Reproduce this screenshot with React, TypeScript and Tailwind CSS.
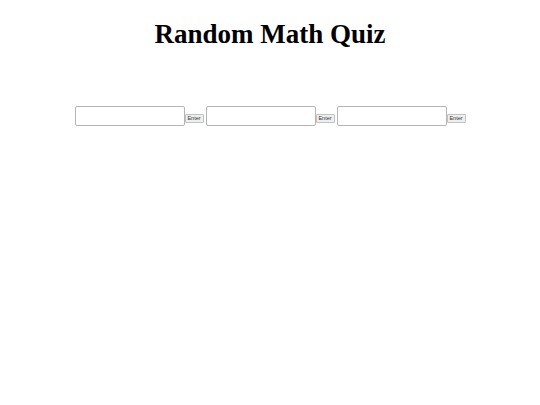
import React from 'react';

const Field: React.FC = () => (
  <div className="flex items-start">
    <input
      type="text"
      className="w-[110px] h-[20px] border border-[#b5b5b5] rounded-[2px] bg-white outline-none"
    />
    <button
      className="mt-[8px] h-[9px] w-[19px] border border-[#c2c2c2] rounded-[1px] bg-[#efefef] text-[5.5px] leading-[7px] text-[#333]"
      style={{ fontFamily: '"Liberation Sans", Arial, sans-serif' }}
    >
      Enter
    </button>
  </div>
);

const App: React.FC = () => {
  return (
    <div className="w-[540px] h-[405px] bg-white">
      <h1
        className="pt-[18px] text-center text-[27px] font-bold text-black leading-[32px]"
        style={{ fontFamily: '"Liberation Serif", "Times New Roman", serif' }}
      >
        Random Math Quiz
      </h1>
      <div className="mt-[56px] flex justify-center gap-[2px]">
        <Field />
        <Field />
        <Field />
      </div>
    </div>
  );
};

export default App;
